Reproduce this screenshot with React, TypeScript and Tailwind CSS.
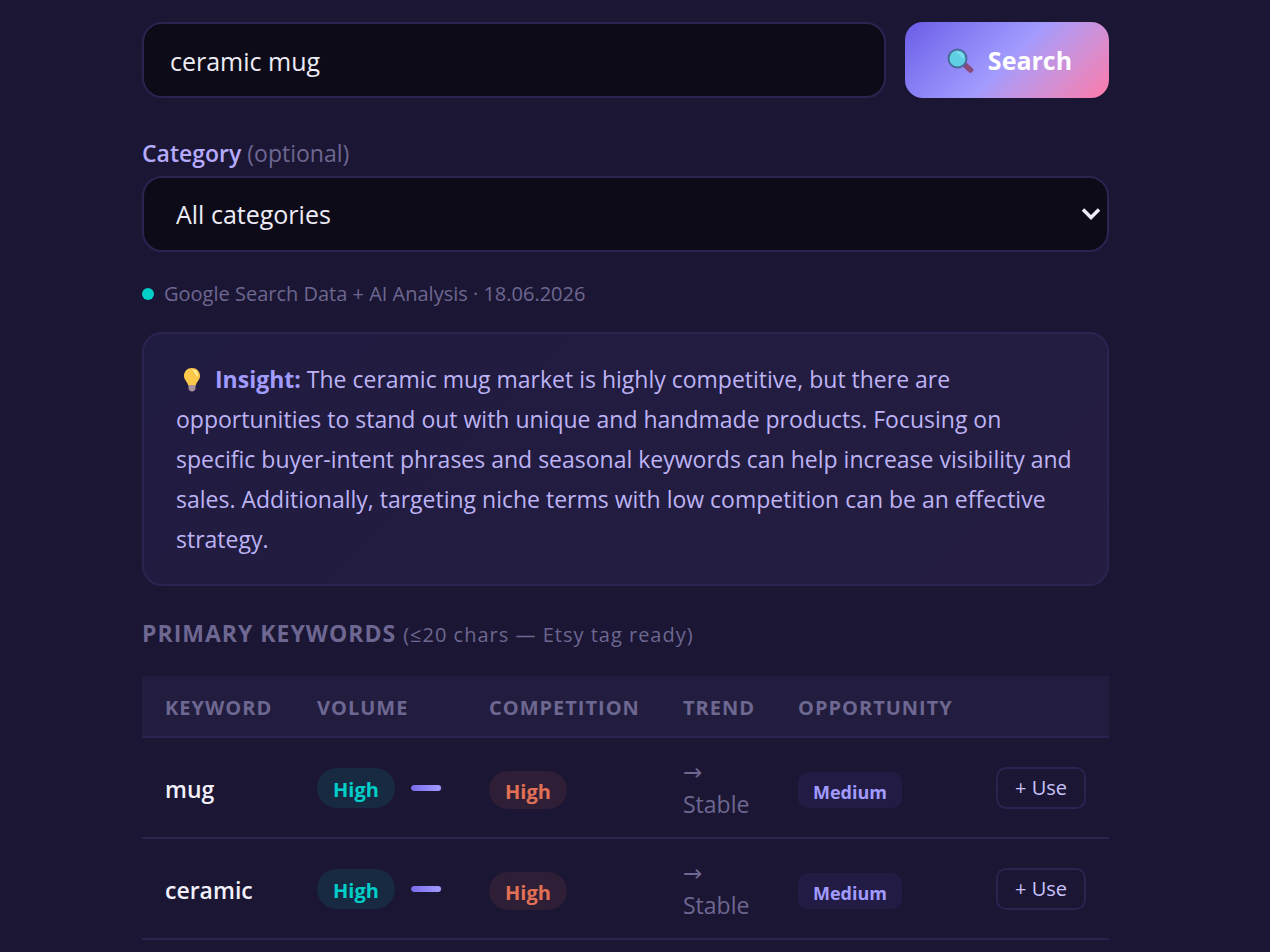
import { clsx } from "clsx";
import type { ReactNode } from "react";

type Level = "High" | "Medium" | "Low";

type KeywordRow = {
  keyword: string;
  volume: Level;
  volumeShare: number;
  competition: Level;
  trend: string;
  opportunity: Level;
};

const CATEGORIES = ["All categories", "Home & Living", "Jewelry", "Craft Supplies"];

const PRIMARY_KEYWORDS: KeywordRow[] = [
  {
    keyword: "mug",
    volume: "High",
    volumeShare: 94,
    competition: "High",
    trend: "Stable",
    opportunity: "Medium",
  },
  {
    keyword: "ceramic",
    volume: "High",
    volumeShare: 94,
    competition: "High",
    trend: "Stable",
    opportunity: "Medium",
  },
];

function MagnifierIcon() {
  return (
    <svg viewBox="0 0 28 28" className="size-7 shrink-0" aria-hidden="true">
      <path d="M19 18 L24.500 23" stroke="#8b4a78" strokeWidth="5.500" strokeLinecap="round" />
      <path d="M17 16 L19.500 18.500" stroke="#5a5a92" strokeWidth="3" />
      <circle cx="11.500" cy="11.500" r="9" fill="#5fcfe3" stroke="#4a6a9c" strokeWidth="2" />
      <path d="M11 5.500 A6 6 0 0 1 17 11" stroke="#8fe3ee" strokeWidth="1.500" fill="none" />
    </svg>
  );
}

function BulbIcon() {
  return (
    <svg
      viewBox="0 0 18 26"
      className="mr-2 ml-[7px] inline h-[26px] w-[18px] align-[-5px]"
      aria-hidden="true"
    >
      <path
        d="M9 1 C4.300 1 1 4.500 1 8.700 C1 12.800 4.200 14.200 5.200 18.500 H12.800 C13.800 14.200 17 12.800 17 8.700 C17 4.500 13.700 1 9 1 Z"
        fill="#fcc84a"
      />
      <path d="M9 2.500 C13 2 16 6 14 10 C13 8 12 5 9 2.500 Z" fill="#fff0a8" />
      <path
        d="M5.500 18 H12.500 V21.500 C12.500 23 11 24.500 9 24.500 C7 24.500 5.500 23 5.500 21.500 Z"
        fill="#a8929c"
      />
    </svg>
  );
}

function Badge({ className, children }: { className: string; children: ReactNode }) {
  return (
    <span className={clsx("inline-block pt-1 align-middle font-bold", className)}>
      {children}
    </span>
  );
}

function Th({ children }: { children?: ReactNode }) {
  return (
    <th
      scope="col"
      className="px-[23px] pt-[18px] pb-3.5 text-left text-xl leading-7 font-bold tracking-[1px]"
    >
      {children}
    </th>
  );
}

function KeywordTableRow({ row }: { row: KeywordRow }) {
  return (
    <tr className="h-[101px] border-b-2 border-[#2a2450]">
      <td className="px-[23px] pt-1 text-[23px] font-semibold text-[#f1f0fa]">{row.keyword}</td>
      <td className="px-[23px]">
        <div className="flex items-center gap-4">
          <Badge className="rounded-[20px] bg-[#172a42] px-4 text-xl leading-9 text-[#00cec9]">
            {row.volume}
          </Badge>
          <div className="h-1.5 w-8 shrink-0 overflow-hidden rounded-full bg-[#231d42]">
            <div
              className="h-full rounded-full bg-linear-to-r from-[#7b6cec] to-[#a29bfe]"
              style={{ width: `${row.volumeShare}%` }}
            />
          </div>
        </div>
      </td>
      <td className="px-[23px] pt-1">
        <Badge className="rounded-[20px] bg-[#2e1f37] px-4 text-xl leading-[34px] text-[#e17055]">
          {row.competition}
        </Badge>
      </td>
      <td className="px-[23px] text-[23px] leading-8 text-[#6d6791]">
        <span className="block font-['DejaVu_Sans',sans-serif] leading-8">→</span>
        {row.trend}
      </td>
      <td className="px-[23px] pt-1">
        <Badge className="rounded-[10px] bg-[#221c45] px-[15px] text-lg leading-8 text-[#a29bfe]">
          {row.opportunity}
        </Badge>
      </td>
      <td className="px-[23px] text-right">
        <button
          type="button"
          className="rounded-[10px] border-2 border-[#2a2450] px-[17px] text-xl leading-[38px] text-[#c9c2fb]"
        >
          + Use
        </button>
      </td>
    </tr>
  );
}

export default function App() {
  return (
    <main className="min-h-screen bg-[#1b1633] pt-[22px] pr-[161px] pl-[142px] font-['Open_Sans','Noto_Sans',sans-serif]">
      <form className="flex gap-[19px]" onSubmit={(e) => e.preventDefault()}>
        <input
          type="text"
          aria-label="Keyword"
          defaultValue="ceramic mug"
          className="h-[76px] min-w-0 flex-1 rounded-[20px] border-2 border-[#2a2450] bg-[#0e0b19] px-[26px] pt-0.5 text-[25px] text-[#ececf5] outline-none"
        />
        <button
          type="submit"
          className="flex h-[76px] w-[204px] shrink-0 items-center justify-center gap-3.5 rounded-[18px] bg-linear-135 from-[#6c5ce7] via-[#a29bfe] to-[#fd79a8] pt-0.5 pl-1 text-[25px] font-bold text-white"
        >
          <MagnifierIcon />
          Search
        </button>
      </form>

      <label
        htmlFor="category"
        className="mt-[35px] block text-[23px] leading-10 font-semibold text-[#b5aafc]"
      >
        Category <span className="font-normal text-[#6d6791]">(optional)</span>
      </label>
      <div className="relative mt-[3px]">
        <select
          id="category"
          className="h-[76px] w-full appearance-none rounded-[20px] border-2 border-[#2a2450] bg-[#0e0b19] px-8 pt-0.5 text-[25px] text-[#ececf5] outline-none"
        >
          {CATEGORIES.map((category) => (
            <option key={category}>{category}</option>
          ))}
        </select>
        <svg
          viewBox="0 0 20 14"
          className="pointer-events-none absolute top-[31px] right-2 h-3.5 w-5"
          aria-hidden="true"
        >
          <path d="M2 2.500 L10 10.500 L18 2.500" fill="none" stroke="#eeedf6" strokeWidth="3.500" />
        </svg>
      </div>

      <p className="mt-7 flex items-center gap-2.5 text-xl leading-7 text-[#6d6791]">
        <span className="size-3 rounded-full bg-[#00cec9]" />
        Google Search Data + AI Analysis · 18.06.2026
      </p>

      <section className="mt-6 rounded-[20px] border-2 border-[#2a2450] bg-linear-135 from-[#201b40] to-[#241d40] py-[25px] pr-[30px] pl-8 text-[23px] leading-10 text-[#bdb3f5]">
        <BulbIcon /> <b className="font-bold text-[#a29bfe]">Insight:</b> The ceramic mug market is
        highly competitive, but there are opportunities to stand out with unique and handmade
        products. Focusing on specific buyer-intent phrases and seasonal keywords can help increase
        visibility and sales. Additionally, targeting niche terms with low competition can be an
        effective strategy.
      </section>

      <h2 className="mt-[31px] text-[23px] leading-8 font-bold tracking-[1px] text-[#6d6791]">
        PRIMARY KEYWORDS{" "}
        <span className="text-xl font-normal">(≤20 chars — Etsy tag ready)</span>
      </h2>

      <table className="mt-[27px] w-full table-fixed border-collapse">
        <colgroup>
          <col className="w-[152px]" />
          <col className="w-[172px]" />
          <col className="w-[194px]" />
          <col className="w-[115px]" />
          <col className="w-[197px]" />
          <col />
        </colgroup>
        <thead>
          <tr className="border-b-2 border-[#2a2450] bg-[#221d3e] text-[#6d6791]">
            <Th>KEYWORD</Th>
            <Th>VOLUME</Th>
            <Th>COMPETITION</Th>
            <Th>TREND</Th>
            <Th>OPPORTUNITY</Th>
            <Th />
          </tr>
        </thead>
        <tbody>
          {PRIMARY_KEYWORDS.map((row) => (
            <KeywordTableRow key={row.keyword} row={row} />
          ))}
        </tbody>
      </table>
    </main>
  );
}
